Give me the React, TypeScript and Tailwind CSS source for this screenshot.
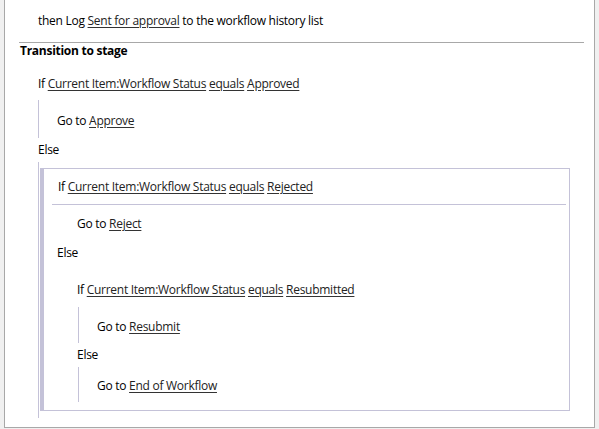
import React from 'react';

const Link = ({ children }: { children: React.ReactNode }) => (
  <span className="underline underline-offset-2 decoration-[#333] text-[#222]">{children}</span>
);

const Condition = ({ value }: { value: string }) => (
  <>
    If <Link>Current Item:Workflow Status</Link> <Link>equals</Link> <Link>{value}</Link>
  </>
);

export default function App() {
  return (
    <div
      className="w-[599px] h-[429px] bg-[#f0f0f0] overflow-hidden text-[12px] leading-[16px] tracking-[-0.27px] text-black"
      style={{ fontFamily: '"Open Sans", "Noto Sans", sans-serif' }}
    >
      <div className="ml-[4px] w-[591px] h-[428px] bg-white border-l border-r border-b border-[#a8a8a8] overflow-hidden">
        <div className="pt-[13px] pl-[33px] whitespace-nowrap">
          then Log <Link>Sent for approval</Link> to the workflow history list
        </div>

        <div className="mt-[13px] ml-[14px] w-[565px] h-px bg-[#a8a8a8]" />

        <div className="pl-[15px] font-bold">Transition to stage</div>

        <div className="mt-[17px] pl-[33px] whitespace-nowrap">
          <Condition value="Approved" />
        </div>

        <div className="mt-[8px] ml-[33px] border-l border-[#c4c2d8] pt-[13px] pb-[9px] pl-[18px]">
          Go to <Link>Approve</Link>
        </div>

        <div className="mt-[4px] pl-[33px]">Else</div>

        <div className="mt-[4px] ml-[33px] w-[532px] border-l border-[#c4c2d8] pl-px pt-[6px] pb-[7px]">
          <div className="border-l-4 border-t border-r border-b border-[#c4c2d8] pb-[8px]">
            <div className="pt-[10px] pl-[14px] whitespace-nowrap">
              <Condition value="Rejected" />
            </div>
            <div className="mt-[9px] ml-[8px] mr-[3px] h-px bg-[#c4c2d8]" />
            <div className="mt-[11px] pl-[33px]">
              Go to <Link>Reject</Link>
            </div>
            <div className="mt-[13px] pl-[13px]">Else</div>
            <div className="mt-[21px] pl-[33px] whitespace-nowrap">
              <Condition value="Resubmitted" />
            </div>
            <div className="mt-[9px] ml-[34px] border-l border-[#c4c2d8] pt-[12px] pb-[8px] pl-[18px]">
              Go to <Link>Resubmit</Link>
            </div>
            <div className="mt-[4px] pl-[33px]">Else</div>
            <div className="mt-[4px] ml-[34px] border-l border-[#c4c2d8] pt-[11px] pb-[8px] pl-[18px]">
              Go to <Link>End of Workflow</Link>
            </div>
          </div>
        </div>
      </div>
    </div>
  );
}
